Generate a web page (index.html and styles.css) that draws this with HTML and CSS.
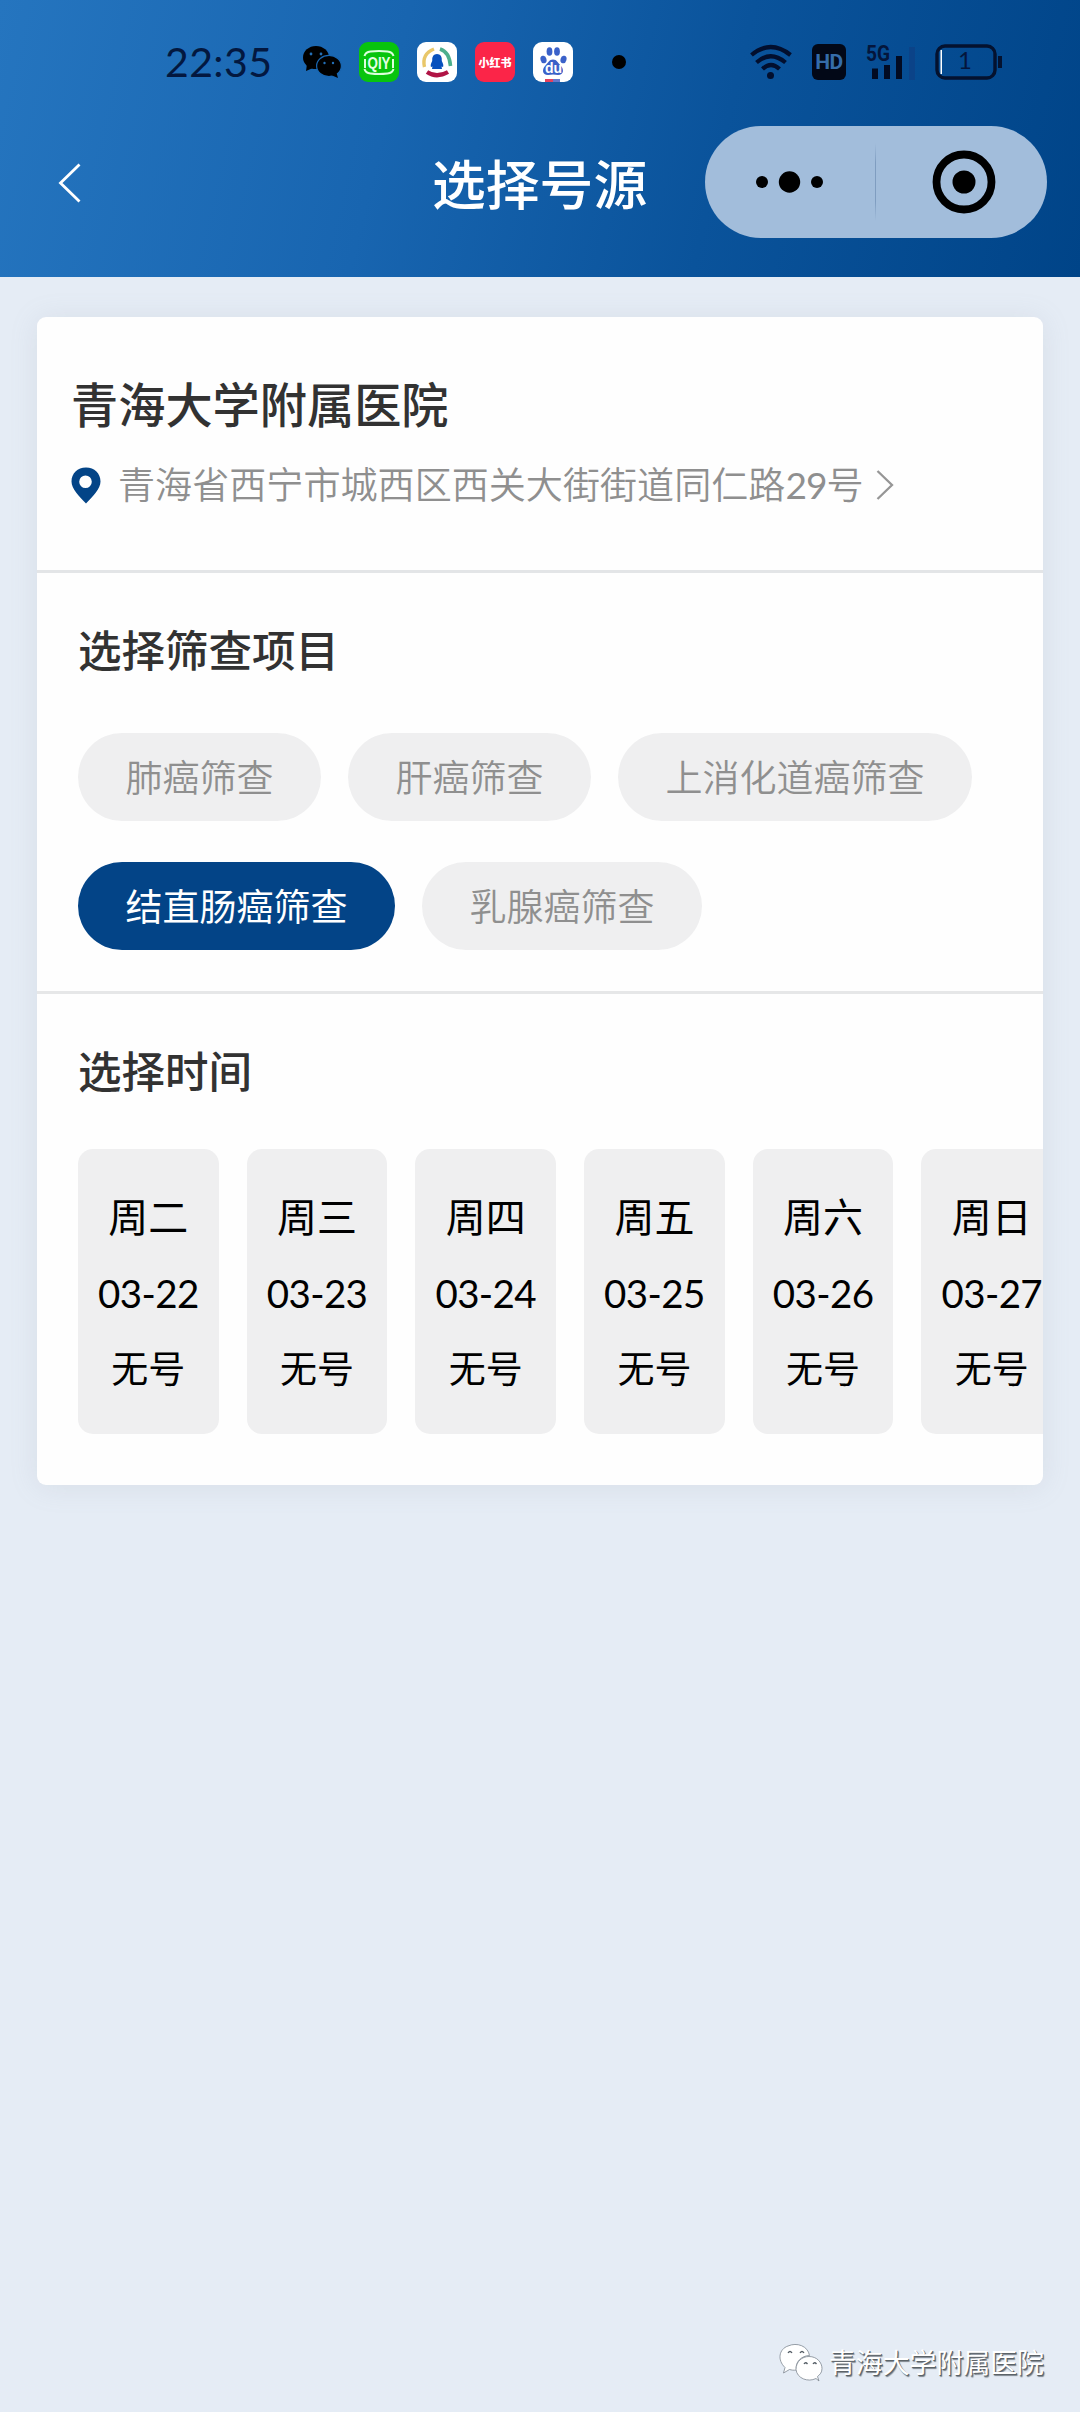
FILE: index.html
```html
<!DOCTYPE html>
<html lang="zh-CN">
<head>
<meta charset="utf-8">
<title>选择号源</title>
<link rel="stylesheet" href="styles.css">
</head>
<body>
<div class="screen">
  <header class="header">
    <div class="status">
      <span class="clock">22:35</span>
      <svg class="wechat" viewBox="0 0 40 34"><ellipse cx="14" cy="12.5" rx="13" ry="11.5"/><path d="M5 19l-1 7 7-3z"/><ellipse cx="27" cy="21" rx="12.4" ry="10.6" stroke="#1866b1" stroke-width="1.2"/><path d="M29 30l7 3-2-7z"/><g fill="#2370b8"><circle cx="9" cy="9" r="1.4"/><circle cx="19" cy="9" r="1.4"/><circle cx="22.5" cy="18" r="1.2"/><circle cx="31" cy="18" r="1.2"/></g></svg>
      <svg class="app" viewBox="0 0 40 40"><rect width="40" height="40" rx="9" fill="#08c40d"/><g fill="none" stroke="#dcffdc" stroke-width="2"><path d="M5.500 14q1-4 6-4.500q8.500-1 17 0q5 .5 6 4.500M5.500 27q1 4 6 4.500q8.500 1 17 0q5-.5 6-4.500M6 17v9M34 17v9"/></g><text x="20" y="27" class="qiy" textLength="23" lengthAdjust="spacingAndGlyphs">QIY</text></svg>
      <svg class="app" viewBox="0 0 40 40"><rect width="40" height="40" rx="9" fill="#fff"/><g fill="none"><path d="M7.500 25Q4.500 12 17 7" stroke="#e9c769" stroke-width="3.400"/><path d="M23 7q9.500 3 10.500 17" stroke="#4caf8c" stroke-width="3.600"/><path d="M10 30q9.500 6.500 21 0" stroke="#b01445" stroke-width="4.200"/></g><path d="M15.200 19q-.5-7 4.800-7t4.800 7q2.200 4 1.200 6l-1.500-.5.5 2.500H15l.5-2.500-1.500.5q-1-2 1.200-6z" fill="#0851bd"/></svg>
      <svg class="app" viewBox="0 0 40 40"><rect width="40" height="40" rx="9" fill="#fb2548"/><text x="20" y="24.500" class="xhs">小红书</text></svg>
      <svg class="app" viewBox="0 0 40 40"><rect width="40" height="40" rx="9" fill="#fff"/><g fill="#3a61c9"><ellipse cx="10.500" cy="17.500" rx="3" ry="3.800" transform="rotate(-15 10.500 17.500)"/><ellipse cx="16.500" cy="9.500" rx="2.900" ry="4.300"/><ellipse cx="24" cy="9.500" rx="2.900" ry="4.300"/><ellipse cx="30.500" cy="17.500" rx="3" ry="3.800" transform="rotate(15 30.500 17.500)"/><path d="M20 17.500c4 0 5 3.500 8 6.500s3 9-3 9q-5-1-10 0c-6 0-6-6-3-9s4-6.500 8-6.500z"/></g><text x="20.500" y="31" class="du">du</text><path fill="#e6405c" d="M12 37h8v3h-8z"/><path fill="#6477cc" d="M20 37h7v3h-7z"/></svg>
      <i class="more-dot"></i>
      <svg class="wifi" viewBox="0 0 42 36"><g fill="none" stroke="#020f2e" stroke-width="4.200"><path d="M1.500 11Q20.500-5 40.500 11M6.500 18.500q14-12.500 29 0M12.500 25q8.500-8 17 0"/></g><circle cx="20.500" cy="31.500" r="3.500" fill="#020f2e"/></svg>
      <span class="hd">HD</span>
      <svg class="signal" viewBox="0 0 52 38"><text x="0" y="17.500" textLength="24" lengthAdjust="spacingAndGlyphs">5G</text><path d="M6 25.500h6V36H6zM18 22h6v14h-6zM30 13h6v23h-6z" fill="#020b22"/><path d="M43 4h6v33h-6z" fill="#0b4388"/></svg>
      <svg class="battery" viewBox="0 0 68 36"><rect x="2" y="2" width="58" height="32" rx="8" fill="none" stroke="#04122f" stroke-width="3.400"/><path d="M63 12h4v12h-4z" fill="#04122f"/><path d="M5.500 6H7v24H5.500z" fill="#fff"/><text x="30" y="25">1</text></svg>
    </div>
    <nav class="nav">
      <svg class="back" viewBox="0 0 24 40"><path d="M21.500 2L2.500 20.500l19 18.500" fill="none" stroke="#fff" stroke-width="2.800"/></svg>
      <h1>选择号源</h1>
      <div class="capsule">
        <svg class="dots" viewBox="0 0 70 24"><circle cx="8" cy="12" r="6"/><circle cx="35.500" cy="12" r="10.700"/><circle cx="63" cy="12" r="6"/></svg>
        <i class="split"></i>
        <svg class="target" viewBox="0 0 64 64"><circle cx="32" cy="32" r="27.500" fill="none" stroke="#000" stroke-width="7.800"/><circle cx="32" cy="32" r="11.500"/></svg>
      </div>
    </nav>
  </header>
  <main class="card">
    <section class="hospital">
      <h2>青海大学附属医院</h2>
      <p class="address">
        <svg class="pin" viewBox="0 0 30 37"><path fill-rule="evenodd" d="M15 .5C6.500.5.500 6.500.500 14.500 .5 22 8 29 15 36.500 22 29 29.500 22 29.500 14.500 29.500 6.500 23.500.5 15 .5zM14.500 8.500a6.300 6.300 0 1 1 0 12.600 6.300 6.300 0 0 1 0-12.600z" fill="#034487"/></svg>
        <span>青海省西宁市城西区西关大街街道同仁路<span class="num">29</span>号</span>
        <svg class="arrow" viewBox="0 0 18 30"><path d="M1.500 1l14.500 14L1.500 29" fill="none" stroke="#969696" stroke-width="2.300"/></svg>
      </p>
    </section>
    <section class="projects">
      <h3>选择筛查项目</h3>
      <div class="chips">
        <span class="chip">肺癌筛查</span><span class="chip">肝癌筛查</span><span class="chip">上消化道癌筛查</span><span class="chip active">结直肠癌筛查</span><span class="chip">乳腺癌筛查</span>
      </div>
    </section>
    <section class="times">
      <h3>选择时间</h3>
      <div class="days">
        <div class="day"><b>周二</b><time>03-22</time><span>无号</span></div>
        <div class="day"><b>周三</b><time>03-23</time><span>无号</span></div>
        <div class="day"><b>周四</b><time>03-24</time><span>无号</span></div>
        <div class="day"><b>周五</b><time>03-25</time><span>无号</span></div>
        <div class="day"><b>周六</b><time>03-26</time><span>无号</span></div>
        <div class="day"><b>周日</b><time>03-27</time><span>无号</span></div>
      </div>
    </section>
  </main>
  <footer class="watermark">
    <svg class="mark" viewBox="0 0 44 38"><g fill="#fff" stroke="#7d8690" stroke-width=".8"><path d="M6 23.500C-2 16 0 5 9 2c9-4 20 0 21.500 9.500-8 0-15 7-13 14.500-3 .5-5 0-7-.5l-6 3.500z"/><path d="M37 34.500c-8 4-19 0-20-9 0-8 6-13 13-13 8 0 13 6 13 12 0 4-2 6-4.500 8l1.500 4.500z"/></g><g fill="none" stroke="#555e66" stroke-width="1.300"><path d="M9 9q2-3 4 0M21 9q2-3 4 0M25 20q1.500-2.500 3.500 0M34 20q1.500-2.500 3.500 0"/></g></svg>
    <span>青海大学附属医院</span>
  </footer>
</div>
</body>
</html>
```
FILE: styles.css
```css
* { box-sizing: border-box; margin: 0; padding: 0; }
body { background: #e5ecf5; font-family: Lato, "Noto Sans CJK SC", sans-serif; }
svg { display: block; flex: none; overflow: visible; }
.screen { width: 1080px; height: 2412px; overflow: hidden; display: flex; flex-direction: column; }

.header { height: 277px; flex: none; background: linear-gradient(103deg, #2575bf 0%, #1865b0 36%, #0a539b 66%, #004488 100%); }
.status { height: 126px; padding: 0 76px 2px 165px; display: flex; align-items: center; }
.clock { width: 137px; flex: none; font-size: 41px; line-height: 48px; letter-spacing: .4px; color: #031840; }
.wechat { width: 40px; height: 34px; margin-right: 17px; }
.app { width: 40px; height: 40px; margin-right: 18px; }
.qiy { font: 700 17px "Liberation Sans", sans-serif; fill: #e4ffe4; text-anchor: middle; }
.xhs { font: 900 11px "Noto Sans CJK SC", sans-serif; fill: #fff; text-anchor: middle; }
.du { font: 700 14px "Liberation Sans", sans-serif; fill: #fff; text-anchor: middle; }
.more-dot { flex: none; width: 14px; height: 14px; margin-left: 21px; border-radius: 50%; background: #000; }
.wifi { width: 42px; height: 36px; margin-left: 124px; }
.hd { flex: none; width: 34px; height: 36px; margin-left: 20px; border-radius: 6px; background: #020817; color: #356ca9; font: 700 21px/37px Roboto, sans-serif; text-align: center; letter-spacing: -.5px; }
.signal { width: 52px; height: 38px; margin-left: 20px; }
.signal text { font: 700 22px Roboto, sans-serif; fill: #04163c; }
.battery { width: 68px; height: 36px; margin-left: 17px; }
.battery text { font: 24px Lato, sans-serif; fill: #04163c; text-anchor: middle; }

.nav { height: 112px; padding: 0 33px 0 58px; display: grid; grid-template-columns: 342px 1fr 342px; align-items: center; }
.back { width: 24px; height: 41px; }
.nav h1 { margin-left: 32px; padding-top: 4px; font-size: 53.800px; font-weight: 500; line-height: 108px; white-space: nowrap; color: #fff; }
.capsule { width: 342px; height: 112px; border-radius: 56px; background: #a2bddb; display: flex; align-items: center; }
.dots { width: 70px; height: 24px; margin-left: 49px; }
.split { width: 1px; height: 78px; margin-left: 51px; background: linear-gradient(#a2bddb, #7f9dc0 25%, #7f9dc0 75%, #a2bddb); }
.target { width: 64px; height: 64px; margin-left: 56px; }

.card { flex: none; width: 1006px; height: 1168px; margin: 40px 0 0 37px; border-radius: 9px; overflow: hidden; background: #fefefe; box-shadow: 0 2px 28px rgba(140, 145, 160, .15); }
.hospital { height: 256px; padding: 58px 34px 0; border-bottom: 3px solid #e3e5e7; }
.hospital h2 { font-size: 47.200px; font-weight: 500; line-height: 60px; color: #323232; }
.address { height: 50px; margin-top: 25px; display: flex; align-items: center; font-size: 37.100px; line-height: 50px; color: #8f8f8f; white-space: nowrap; font-weight: 350; }
.address .num { font-weight: 400; letter-spacing: -1px; }
.pin { width: 30px; height: 37px; margin-right: 17px; }
.arrow { width: 18px; height: 30px; margin-left: 12px; }

.projects { height: 421px; padding: 47px 34px 0 41px; border-bottom: 3px solid #e6e7e8; }
h3 { font-size: 43.500px; font-weight: 500; line-height: 60px; color: #323232; }
.chips { margin-top: 53px; display: flex; flex-wrap: wrap; gap: 41px 27px; }
.chip { height: 88px; padding: 1px 47.500px 0; border-radius: 44px; background: #efeff0; color: #8f8f8f; font-size: 37px; font-weight: 350; line-height: 88px; white-space: nowrap; }
.chip.active { background: #034487; color: #fff; font-weight: 400; }

.times { padding: 47px 0 0 41px; }
.days { margin-top: 48px; display: flex; gap: 28px; overflow: hidden; }
.day { flex: none; width: 140.700px; height: 285px; padding-top: 40px; border-radius: 15px; background: #efeff0; color: #000; display: flex; flex-direction: column; align-items: center; white-space: nowrap; }
.day b { font-size: 40px; font-weight: 400; line-height: 56px; }
.day time { margin-top: 20px; font-size: 38.500px; line-height: 56px; letter-spacing: -.6px; }
.day span { margin-top: 20px; font-size: 37px; line-height: 56px; }

.watermark { margin: auto 36px 29px auto; display: flex; align-items: center; gap: 6px; font-size: 26.900px; line-height: 40px; color: #fff; text-shadow: 1px 1px 0 #5c6368, 1.500px 1.500px 1px #7c848c; }
.mark { width: 44px; height: 38px; }
```
